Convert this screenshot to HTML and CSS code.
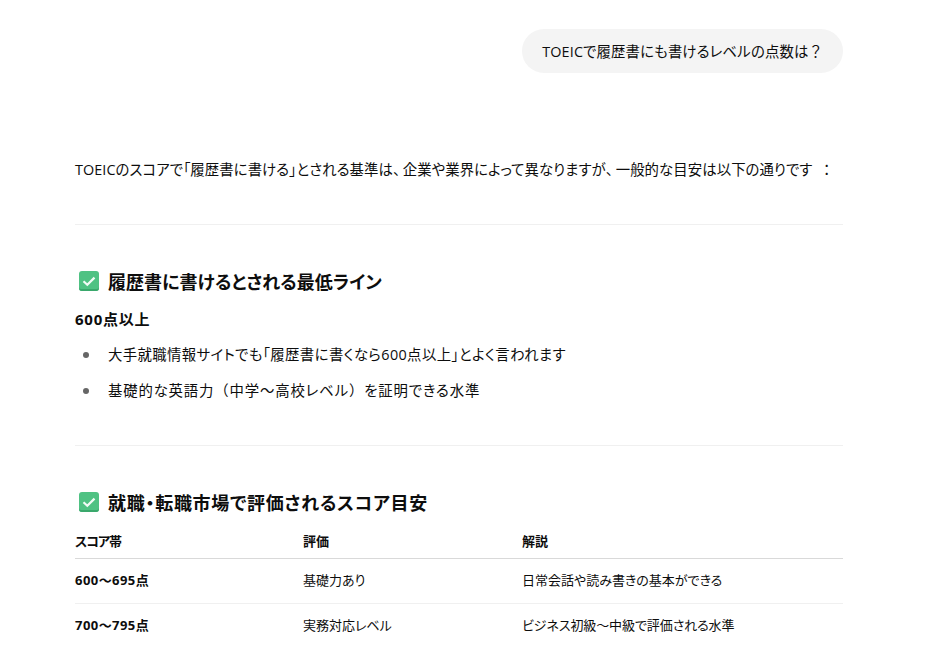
FILE: index.html
```html
<!DOCTYPE html>
<html lang="ja">
<head>
<meta charset="utf-8">
<title>TOEIC</title>
<link rel="stylesheet" href="styles.css">
</head>
<body>
<main class="thread">
  <div class="user-row"><div class="bubble">TOEICで履歴書にも書けるレベルの点数は<span class="full">？</span></div></div>
  <p class="lead">TOEICのスコアで「履歴書に書ける」とされる基準は<span class="comma">、</span>企業や業界によって異なりますが<span class="comma">、</span>一般的な目安は以下の通りです<span class="colon">：</span></p>
  <hr class="rule rule-first">
  <h3 class="heading">
    <svg class="check" viewBox="0 0 20 20" aria-hidden="true"><rect x="0" y="0" width="20" height="20" rx="3" fill="#4fc283"/><path d="M0 16v1a3 3 0 0 0 3 3h14a3 3 0 0 0 3-3v-1a2 2 0 0 1-2 2H2a2 2 0 0 1-2-2z" fill="#3aa86c"/><path d="M4.5 10.3l3.8 3.4L15.5 6.6" fill="none" stroke="#f2fbf6" stroke-width="2.2"/></svg>
    <span>履歴書に書けるとされる最低ライン</span>
  </h3>
  <p class="strong-line"><strong>600点以上</strong></p>
  <ul class="list">
    <li class="wide">大手就職情報サイトでも「履歴書に書くなら600点以上」とよく言われます</li>
    <li class="wider">基礎的な英語力<span class="full">（</span>中学〜高校レベル<span class="full">）</span>を証明できる水準</li>
  </ul>
  <hr class="rule">
  <h3 class="heading heading-wide">
    <svg class="check" viewBox="0 0 20 20" aria-hidden="true"><rect x="0" y="0" width="20" height="20" rx="3" fill="#4fc283"/><path d="M0 16v1a3 3 0 0 0 3 3h14a3 3 0 0 0 3-3v-1a2 2 0 0 1-2 2H2a2 2 0 0 1-2-2z" fill="#3aa86c"/><path d="M4.5 10.3l3.8 3.4L15.5 6.6" fill="none" stroke="#f2fbf6" stroke-width="2.2"/></svg>
    <span>就職・転職市場で評価されるスコア目安</span>
  </h3>
  <table class="score">
    <thead>
      <tr><th class="narrow">スコア帯</th><th>評価</th><th>解説</th></tr>
    </thead>
    <tbody>
      <tr><td><strong>600〜695点</strong></td><td>基礎力あり</td><td>日常会話や読み書きの基本ができる</td></tr>
      <tr><td><strong>700〜795点</strong></td><td>実務対応レベル</td><td class="tight">ビジネス初級〜中級で評価される水準</td></tr>
    </tbody>
  </table>
</main>
</body>
</html>
```
FILE: styles.css
```css
html, body {
  margin: 0;
  padding: 0;
  height: 647px;
  overflow: hidden;
  background: #fff;
}
body {
  font-family: "Open Sans", "Noto Sans CJK JP", sans-serif;
  font-size: 14.4px;
  color: #0d0d0d;
  font-feature-settings: "palt";
}
.full { font-feature-settings: normal; }
.comma { font-feature-settings: normal; letter-spacing: -4.5px; }
.colon { font-feature-settings: normal; padding-left: 7px; }
.thread {
  width: 768px;
  margin-left: 75px;
  padding-top: 29px;
}
.user-row {
  display: flex;
  justify-content: flex-end;
}
.bubble {
  background: #f4f4f4;
  border-radius: 22px;
  height: 44px;
  line-height: 46px;
  padding: 0 20px;
  letter-spacing: .14px;
}
.lead {
  margin: 87px 0 0;
  line-height: 20px;
  white-space: nowrap;
  letter-spacing: .07px;
}
.rule {
  border: 0;
  border-top: 1px solid #f0f0f0;
  margin: 0;
}
.rule-first { margin-top: 44px; }
.heading {
  display: flex;
  align-items: center;
  gap: 9px;
  margin: 42px 0 0 4px;
  height: 28px;
  font-size: 18px;
  font-weight: 700;
}
.heading-wide span { letter-spacing: .72px; }
.check {
  width: 20px;
  height: 20px;
  flex: none;
}
.strong-line {
  margin: 14px 0 0;
  line-height: 20px;
  font-size: 15px;
  letter-spacing: .75px;
}
.list {
  margin: 0;
  padding: 0 0 0 33px;
  list-style: none;
}
.list li {
  position: relative;
  margin-top: 16px;
  line-height: 20px;
}
.list li.wide { letter-spacing: .38px; }
.list li.wider { letter-spacing: .83px; }
.list li::before {
  content: "";
  position: absolute;
  left: -25px;
  top: 7px;
  width: 6px;
  height: 6px;
  border-radius: 50%;
  background: #666;
}
.list + .rule { margin-top: 44px; }
.score {
  width: 768px;
  border-collapse: collapse;
  table-layout: fixed;
  margin-top: 9px;
  font-size: 13px;
}
.score th, .score td {
  text-align: left;
  padding: 0;
}
.score th:nth-child(1) { width: 228px; }
.score th:nth-child(2) { width: 219px; }
.score th {
  height: 33px;
  font-weight: 700;
  border-bottom: 1px solid #d9d9d9;
  padding-bottom: 2px;
  box-sizing: border-box;
}
.score th.narrow { letter-spacing: -1px; }
.score td {
  height: 45px;
  box-sizing: border-box;
  padding-bottom: 2px;
  border-bottom: 1px solid #f0f0f0;
}
.score td.tight { letter-spacing: -.1px; }
.score td strong { letter-spacing: .45px; }
```
